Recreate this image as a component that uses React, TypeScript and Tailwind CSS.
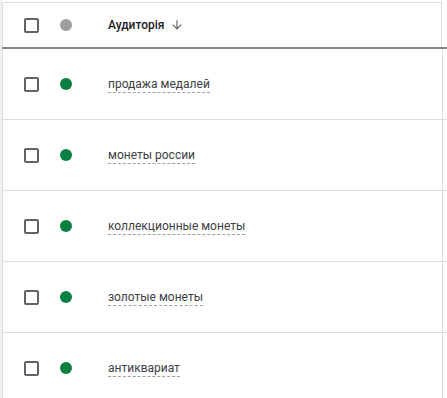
import React from "react";

const rows = ["продажа медалей", "монеты россии", "коллекционные монеты", "золотые монеты", "антиквариат"];

function Box() {
  return <div className="w-[15px] h-[15px] border-2 border-[#5f6368] rounded-[2px] bg-white" />;
}

export default function App() {
  return (
    <div className="w-[447px] h-[398px] overflow-hidden bg-white flex" style={{ fontFamily: "Roboto, 'Noto Sans', sans-serif" }}>
      <div className="w-[2px] shrink-0 bg-[#eef0f3]" />
      <div className="flex-1 pt-[2px]">
        <div className="border-t border-l border-[#dadce0] w-[440px]">
          <div className="flex items-center h-[44px] pl-[21px] border-r border-[#dadce0]">
            <Box />
            <div className="w-[12px] h-[12px] rounded-full bg-[#9e9e9e] ml-[21px]" />
            <div className="ml-[36px] text-[12px] font-medium text-[#202124]">Аудиторія</div>
            <svg className="ml-[6px]" width="14" height="14" viewBox="0 0 24 24" fill="#5f6368">
              <path d="M20 12l-1.41-1.41L13 16.17V4h-2v12.17l-5.58-5.59L4 12l8 8 8-8z" />
            </svg>
          </div>
        </div>
        <div className="h-[2px] bg-[#80868b] w-[445px]" />
        {rows.map((r, i) => (
          <div key={i} className="flex items-center h-[71px] pl-[21px] border-l border-[#dadce0] border-b w-[445px] relative">
            <div className="absolute right-[4px] top-0 bottom-0 w-px bg-[#dadce0]" />
            <Box />
            <div className="w-[12px] h-[12px] rounded-full bg-[#0b8043] ml-[21px]" />
            <div className="ml-[36px] text-[12px] text-[#3c4043] border-b border-dashed border-[#9aa0a6] leading-[16px]">{r}</div>
          </div>
        ))}
      </div>
    </div>
  );
}
